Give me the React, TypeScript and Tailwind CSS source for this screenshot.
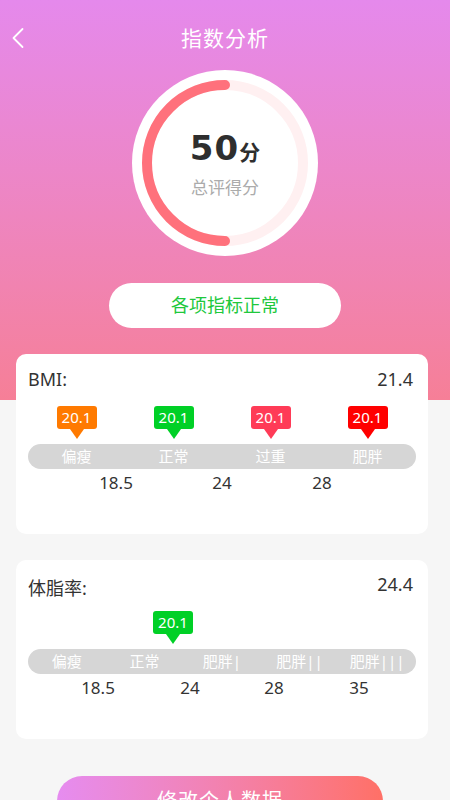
import React from 'react';

const font = { fontFamily: '"Noto Sans", "Noto Sans CJK SC", sans-serif' };

type TagProps = { box: string; tip: string };

function Tag({ box, tip }: TagProps) {
  return (
    <div className="flex flex-col items-center">
      <div className={`w-[40px] h-[23px] rounded-[3px] flex items-center justify-center text-white text-[15px] leading-none ${box}`}>
        20.1
      </div>
      <div className={`w-0 h-0 border-l-[7px] border-r-[7px] border-t-[10px] border-l-transparent border-r-transparent ${tip}`} />
    </div>
  );
}

function Bar({ labels, cols }: { labels: string[]; cols: string }) {
  return (
    <div className={`mt-[5px] h-[25px] rounded-full bg-[#d6d6d6] grid ${cols} items-center text-white text-[15px] leading-none`}>
      {labels.map((l) => (
        <span key={l} className="text-center">
          {l}
        </span>
      ))}
    </div>
  );
}

export default function App() {
  return (
    <div className="w-full min-h-[800px] bg-[#f6f6f6] overflow-hidden" style={font}>
      <div className="bg-gradient-to-b from-[#e589ec] to-[#f67f97] pt-[24px] pb-[72px]">
        <div className="relative h-[28px] flex items-center justify-center">
          <svg className="absolute left-[11px] top-[3px]" width="14" height="22" viewBox="0 0 14 22" fill="none">
            <path d="M11.5 2 L2.5 11 L11.5 20" stroke="white" strokeWidth="1.8" strokeLinecap="round" strokeLinejoin="round" />
          </svg>
          <span className="text-white text-[21px] leading-none tracking-[1px]">指数分析</span>
        </div>

        <div className="relative mx-auto mt-[18px] w-[186px] h-[186px] rounded-full bg-white">
          <svg className="absolute inset-0" width="186" height="186" viewBox="0 0 186 186">
            <circle cx="93" cy="93" r="78" fill="none" stroke="#fff0f1" strokeWidth="10" />
            <path d="M93 15 A78 78 0 0 0 93 171" fill="none" stroke="#ff717c" strokeWidth="10" strokeLinecap="round" />
          </svg>
          <div className="relative flex flex-col items-center pt-[56px]">
            <div className="flex items-baseline h-[44px] leading-[44px]">
              <span className="text-[34px] font-bold text-[#2e2e2e] tracking-[1px]" style={{ fontFamily: '"DejaVu Sans", sans-serif' }}>
                50
              </span>
              <span className="text-[21px] font-bold text-[#2e2e2e]">分</span>
            </div>
            <div className="mt-[6px] text-[17px] leading-[24px] text-[#ababab]">总评得分</div>
          </div>
        </div>

        <div className="mx-auto mt-[27px] w-[232px] h-[45px] rounded-full bg-white flex items-center justify-center text-[18px] text-[#20c83c]">
          各项指标正常
        </div>
      </div>

      <div className="-mt-[46px] ml-[16px] w-[412px] h-[180px] rounded-[10px] bg-white px-[12px] pt-[14px]">
        <div className="flex justify-between items-center h-[22px] pr-[3px] text-[18px] text-[#333]">
          <span>BMI:</span>
          <span>21.4</span>
        </div>
        <div className="mt-[16px] grid grid-cols-4">
          <Tag box="bg-[#ff7a00]" tip="border-t-[#ff7a00]" />
          <Tag box="bg-[#00d026]" tip="border-t-[#00d026]" />
          <Tag box="bg-[#ff3b57]" tip="border-t-[#ff3b57]" />
          <Tag box="bg-[#ff0000]" tip="border-t-[#ff0000]" />
        </div>
        <Bar labels={['偏瘦', '正常', '过重', '肥胖']} cols="grid-cols-4" />
        <div className="mt-[3px] flex text-[17px] leading-[22px] text-[#333]">
          <span className="ml-[58px] w-[60px] text-center">18.5</span>
          <span className="ml-[46px] w-[60px] text-center">24</span>
          <span className="ml-[40px] w-[60px] text-center">28</span>
        </div>
      </div>

      <div className="mt-[26px] ml-[16px] w-[412px] h-[179px] rounded-[10px] bg-white px-[12px] pt-[13px]">
        <div className="flex justify-between items-start pr-[3px] text-[18px] text-[#333]">
          <span className="mt-[4px] leading-[22px]">体脂率:</span>
          <span className="leading-[22px]">24.4</span>
        </div>
        <div className="mt-[12px] flex">
          <div className="ml-[125px]">
            <Tag box="bg-[#00d026]" tip="border-t-[#00d026]" />
          </div>
        </div>
        <Bar labels={['偏瘦', '正常', '肥胖|', '肥胖||', '肥胖|||']} cols="grid-cols-5" />
        <div className="mt-[3px] flex text-[17px] leading-[22px] text-[#333]">
          <span className="ml-[40px] w-[60px] text-center">18.5</span>
          <span className="ml-[32px] w-[60px] text-center">24</span>
          <span className="ml-[24px] w-[60px] text-center">28</span>
          <span className="ml-[25px] w-[60px] text-center">35</span>
        </div>
      </div>

      <div className="mt-[37px] ml-[57px] w-[326px] h-[50px] rounded-full bg-gradient-to-r from-[#e68cf0] to-[#ff7066] flex items-center justify-center text-white text-[20px] tracking-[1px]">
        修改个人数据
      </div>
    </div>
  );
}
